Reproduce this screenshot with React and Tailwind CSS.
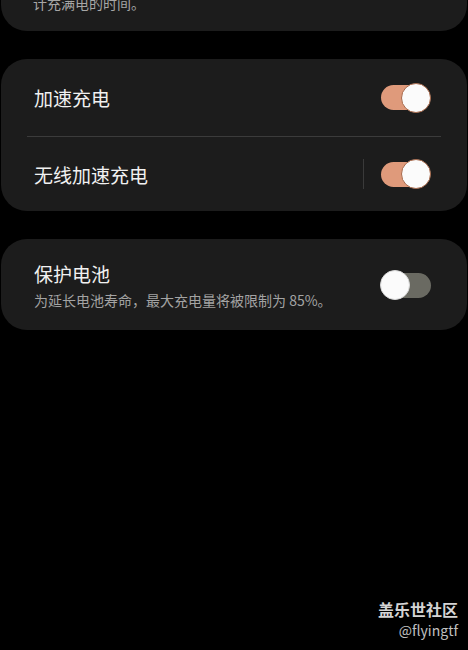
import React from 'react';

const font = { fontFamily: '"Noto Sans CJK SC", "Noto Sans", sans-serif' };

function Toggle({ on }) {
  if (on) {
    return (
      <div className="relative w-[50px] h-[30px] shrink-0">
        <div className="absolute left-0 right-[2px] top-[2.5px] h-[25px] rounded-full bg-[#df9a7b]" />
        <div className="absolute right-0 top-0 w-[30px] h-[30px] rounded-full bg-[#fbfbfb] border-[1.5px] border-[#a8694a]" />
      </div>
    );
  }
  return (
    <div className="relative w-[50px] h-[30px] shrink-0">
      <div className="absolute left-[4px] right-0 top-[3px] h-[25px] rounded-full bg-[#6a6a62]" />
      <div className="absolute left-[-1px] top-0 w-[30px] h-[30px] rounded-full bg-[#fbfbfb] border border-[#d8d8d8]" />
    </div>
  );
}

function SwitchRow({ title, on, split, h }) {
  return (
    <div className={`${h} flex items-center pl-[33px] pr-[36px]`}>
      <span className="flex-1 text-[19px] text-[#f1f1f1] leading-none">{title}</span>
      {split && <div className="w-px h-[30px] bg-[#3a3a3a] mr-[17px]" />}
      <Toggle on={on} />
    </div>
  );
}

export default function App() {
  return (
    <div className="w-[468px] h-[650px] bg-black overflow-hidden flex flex-col" style={font}>
      {/* bottom of the card above, cut off by the top edge */}
      <div className="h-[31px] mx-[1px] rounded-b-[26px] bg-[#1c1c1c] overflow-hidden pl-[32px]">
        <p className="-mt-[7px] text-[14px] leading-[20px] text-[#a6a6a6]">计充满电的时间。</p>
      </div>

      <div className="mt-[28px] mx-[1px] rounded-[26px] bg-[#1c1c1c] flex flex-col">
        <SwitchRow title="加速充电" on h="h-[77px]" />
        <div className="mx-[26px] h-px bg-[#3b3b3b]" />
        <SwitchRow title="无线加速充电" on split h="h-[74px]" />
      </div>

      <div className="mt-[28px] mx-[1px] h-[91px] rounded-[26px] bg-[#1c1c1c] flex pl-[33px] pr-[36px]">
        <div className="flex-1 flex flex-col pt-[22px]">
          <span className="text-[19px] leading-[26px] text-[#f1f1f1]">保护电池</span>
          <span className="mt-[3px] text-[14px] leading-[20px] text-[#a3a3a3]">为延长电池寿命，最大充电量将被限制为 85%。</span>
        </div>
        <div className="self-center">
          <Toggle on={false} />
        </div>
      </div>

      <div className="mt-auto mb-[10px] pr-[10px] flex flex-col items-end">
        <span className="text-[16px] leading-[22px] font-bold text-[#d4d4d4]">盖乐世社区</span>
        <span className="text-[14px] leading-[20px] text-[#c0c0c0]">@flyingtf</span>
      </div>
    </div>
  );
}
